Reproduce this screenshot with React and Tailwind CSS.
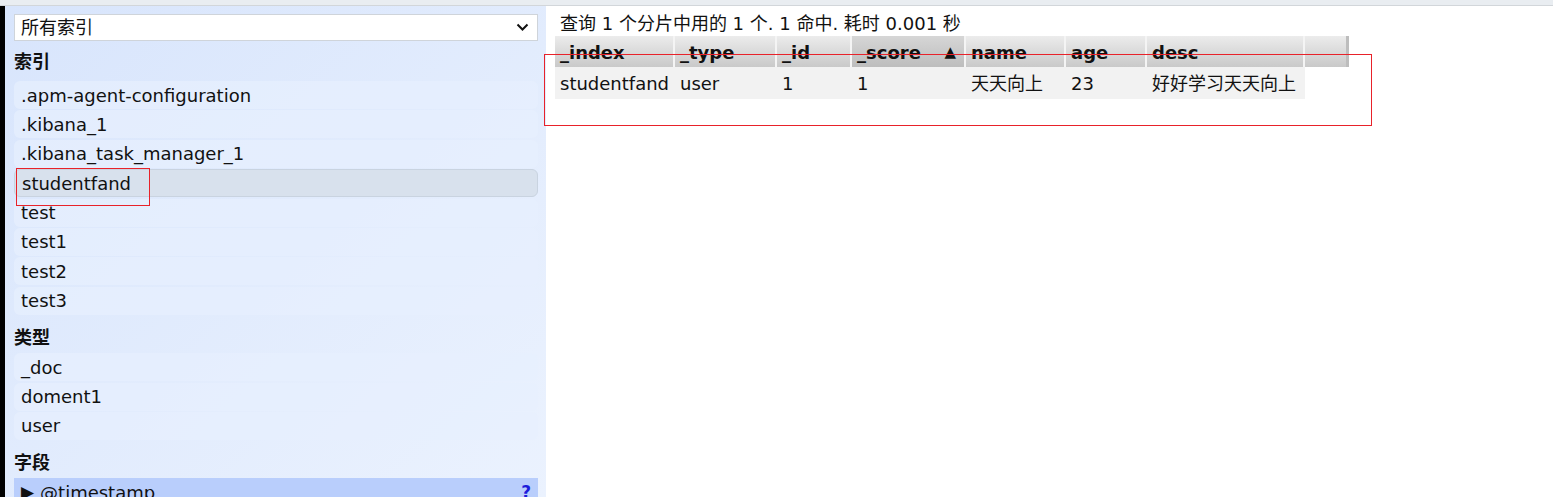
import React from 'react';

const indices = ['.apm-agent-configuration', '.kibana_1', '.kibana_task_manager_1', 'studentfand', 'test', 'test1', 'test2', 'test3'];
const types = ['_doc', 'doment1', 'user'];

const columns = [
  { key: '_index', width: 'w-[120px]' },
  { key: '_type', width: 'w-[102px]' },
  { key: '_id', width: 'w-[75px]' },
  { key: '_score', width: 'w-[114px]', sorted: true },
  { key: 'name', width: 'w-[100px]' },
  { key: 'age', width: 'w-[81px]' },
  { key: 'desc', width: 'w-[158px]' },
];

const row = ['studentfand', 'user', '1', '1', '天天向上', '23', '好好学习天天向上'];

const font = { fontFamily: '"DejaVu Sans", "Noto Sans CJK SC", sans-serif' };

const ListItem = ({ label, selected }) => (
  <div
    className={
      'h-[28px] mb-[1.4px] flex items-center px-[7px] rounded-[6px] ' +
      (selected ? 'bg-[#d8e1ed] border border-[#c9d3e0] px-[6px]' : 'bg-[#e7effd]/70')
    }
  >
    {label}
  </div>
);

const Heading = ({ children }) => (
  <div className="font-bold h-[37px] pt-[5px] flex items-center">{children}</div>
);

const Sidebar = () => (
  <div className="w-[541px] shrink-0 bg-gradient-to-br from-[#d8e5fc] to-[#ebf2fe] pl-[9px] pr-[8px] pt-[8px] relative">
    <div className="h-[27px] bg-white border border-[#cfd4da] flex items-center justify-between pl-[6px] pr-[8px]">
      <span>所有索引</span>
      <svg width="13" height="9" viewBox="0 0 13 9">
        <path d="M1.5 1.5 L6.5 6.5 L11.5 1.5" fill="none" stroke="#111" strokeWidth="2" />
      </svg>
    </div>
    <div className="font-bold h-[40px] flex items-center">索引</div>
    {indices.map((i) => (
      <ListItem key={i} label={i} selected={i === 'studentfand'} />
    ))}
    <Heading>类型</Heading>
    {types.map((t) => (
      <ListItem key={t} label={t} />
    ))}
    <Heading>字段</Heading>
    <div className="h-[28px] bg-[#b9cefc] flex items-center justify-between px-[7px]">
      <span className="flex items-center gap-[6px]">
        <span className="text-[17px] leading-none">▶</span>
        <span>@timestamp</span>
      </span>
      <span className="text-[#1d1ddb] text-[17px] font-bold">?</span>
    </div>
    <div className="absolute left-[11px] top-[162px] w-[134px] h-[38px] border-[1.5px] border-[#e8222a]" />
  </div>
);

const Main = () => (
  <div className="flex-1 bg-white pl-[9px] pt-[4px] relative">
    <div className="h-[26px] flex items-center pl-[5px]">查询 1 个分片中用的 1 个. 1 命中. 耗时 0.001 秒</div>
    <div className="flex">
      {columns.map((c) => (
        <div
          key={c.key}
          className={
            c.width +
            ' h-[31px] flex items-end pb-[1px] pl-[5px] font-bold border-r-2 border-[#f4f4f4] ' +
            (c.sorted
              ? 'bg-gradient-to-b from-[#d6d6d6] to-[#bdbdbd] justify-between pr-[8px]'
              : 'bg-gradient-to-b from-[#ececec] to-[#c9c9c9]')
          }
        >
          <span>{c.key}</span>
          {c.sorted && <span className="text-[15px] mb-[3px]">▲</span>}
        </div>
      ))}
      <div className="w-[44px] h-[31px] bg-gradient-to-b from-[#ececec] to-[#c9c9c9] border-r-[3px] border-[#bdbdbd]" />
    </div>
    <div className="flex bg-[#f2f2f2] w-fit h-[32px] items-center">
      {columns.map((c, i) => (
        <div key={c.key} className={c.width + ' pl-[5px]'}>
          {row[i]}
        </div>
      ))}
    </div>
    <div className="absolute left-[-2px] top-[48px] w-[828px] h-[72px] border-[1.5px] border-[#e8222a]" />
  </div>
);

const App = () => (
  <div className="w-[1553px] h-[497px] overflow-hidden text-[18px] text-[#111] flex flex-col" style={font}>
    <div className="h-[6px] bg-[#e9edf1] border-b border-[#d2d6da] shrink-0" />
    <div className="flex flex-1 min-h-0">
      <div className="w-[5px] bg-black shrink-0" />
      <Sidebar />
      <Main />
    </div>
  </div>
);

export default App;
